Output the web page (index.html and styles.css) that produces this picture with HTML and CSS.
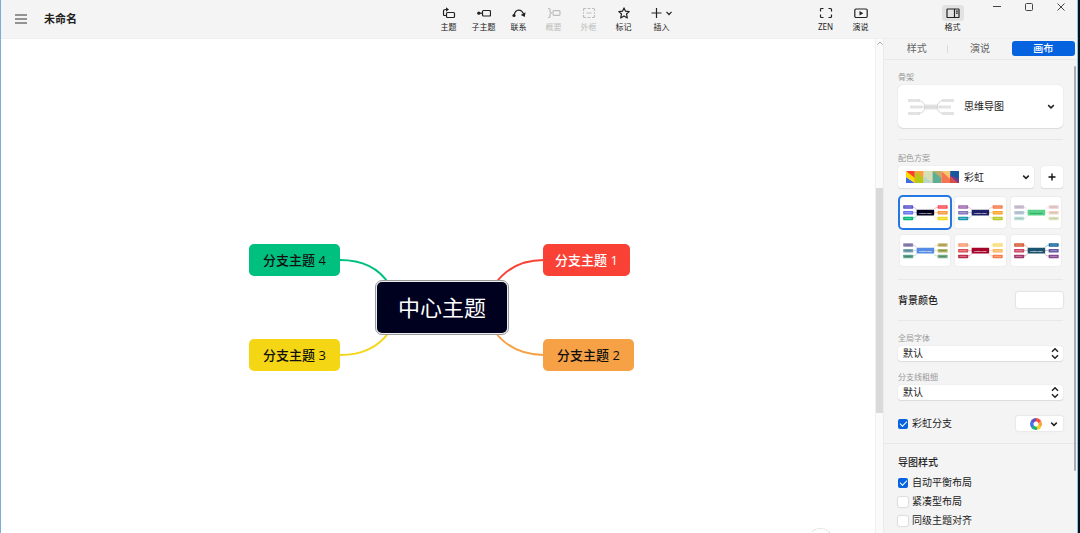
FILE: index.html
```html
<!DOCTYPE html>
<html lang="zh-CN">
<head>
<meta charset="utf-8">
<title>未命名</title>
<link rel="stylesheet" href="styles.css">
</head>
<body>
<svg class="defs" aria-hidden="true">
  <symbol id="chevron" viewBox="0 0 8 8"><path d="M1.2 2.6 4 5.4 6.8 2.6" fill="none" stroke="currentColor" stroke-width="1.5"/></symbol>
  <symbol id="updown" viewBox="0 0 8 12"><path d="M1 4.2 4 1.3 7 4.2M1 7.8 4 10.7 7 7.8" fill="none" stroke="currentColor" stroke-width="1.5"/></symbol>
  <symbol id="map" viewBox="0 0 50 31">
    <g fill="none" stroke-width=".6" opacity=".6">
      <path d="M12 10Q15 10 18 14" stroke="var(--a)"/><path d="M12 15.500H17" stroke="var(--b)"/><path d="M12 21.500Q15 21.500 18 17" stroke="var(--c)"/>
      <path d="M38 10Q35 10 32 14" stroke="var(--d)"/><path d="M38 15.500H33" stroke="var(--e)"/><path d="M38 21.500Q35 21.500 32 17" stroke="var(--f)"/>
    </g>
    <rect x="3" y="8.200" width="10" height="3.500" rx=".6" fill="var(--a)"/><rect x="3" y="14" width="10" height="3.500" rx=".6" fill="var(--b)"/><rect x="3" y="19.700" width="10" height="3.500" rx=".6" fill="var(--c)"/>
    <rect x="37.500" y="8.200" width="10" height="3.500" rx=".6" fill="var(--d)"/><rect x="37.500" y="14" width="10" height="3.500" rx=".6" fill="var(--e)"/><rect x="37.500" y="19.700" width="10" height="3.500" rx=".6" fill="var(--f)"/>
    <rect x="16.500" y="12.800" width="17.500" height="5.600" rx=".8" fill="var(--m)"/>
    <g stroke="var(--t)" stroke-width="1" opacity=".35"><path d="M4.500 10h7M4.500 15.700h7M4.500 21.400h7M39 10h7M39 15.700h7M39 21.400h7"/></g>
  </symbol>
</svg>
<div class="app">
  <header class="topbar">
    <div class="doc">
      <button class="menu" aria-label="菜单"><svg width="12" height="10" viewBox="0 0 12 10"><path d="M0 1h12M0 5h12M0 9h12" stroke="#333" stroke-width="1.200"/></svg></button>
      <h1 class="title">未命名</h1>
    </div>
    <nav class="tools">
      <button class="tool"><svg class="ico" viewBox="0 0 14 12"><rect x="4.500" y="5.500" width="8" height="5" rx="1"/><path d="M4.500 8.500H2.500Q1.500 8.500 1.500 7.500V4.500Q1.500 2.500 3.500 2.500H5"/><path class="dot" d="M4 .2 7 2.500 4 4.800Z"/></svg>主题</button>
      <button class="tool"><svg class="ico" viewBox="0 0 14 12"><rect x="5.500" y="3.500" width="8" height="5.500" rx="1"/><path d="M1 6.200H5.500"/><circle class="dot" cx="1.800" cy="6.200" r="1.600"/></svg>子主题</button>
      <button class="tool"><svg class="ico" viewBox="0 0 14 12"><path d="M2 8.500C3.500 1.500 9.500 1.500 12 8"/><circle class="dot" cx="2" cy="8.500" r="1.600"/><path class="dot" d="M13.500 5.200 12.800 10 8.800 8Z"/></svg>联系</button>
      <button class="tool" disabled><svg class="ico" viewBox="0 0 14 12"><path d="M1 1.500H2Q3 1.500 3 2.500V4.800L4.300 6 3 7.200V9.500Q3 10.500 2 10.500H1"/><rect x="6" y="3.700" width="7" height="4.600" rx="1"/></svg>概要</button>
      <button class="tool" disabled><svg class="ico" viewBox="0 0 14 12"><path d="M4 1.500H2.500Q1.500 1.500 1.500 2.500V4M1.500 5.200V6.800M1.500 8V9.500Q1.500 10.500 2.500 10.500H4M10 1.500h1.500Q12.500 1.500 12.500 2.500V4M12.500 5.200V6.800M12.500 8V9.500Q12.500 10.500 11.500 10.500H10M5.500 1.500h3M5.500 10.500h3M4.500 6h5"/></svg>外框</button>
      <button class="tool"><svg class="ico" viewBox="0 0 14 12"><path stroke-linejoin="round" d="M7 .9 8.500 4.200 12.200 4.600 9.500 7 10.300 10.900 7 8.900 3.700 10.900 4.500 7 1.800 4.600 5.500 4.200Z"/></svg>标记</button>
      <button class="tool tool-wide"><svg class="ico ico-wide" viewBox="0 0 22 12"><path d="M.5 6H10.500M5.500 1V11M15.500 4.800 18 7.500 20.500 4.800"/></svg>插入</button>
    </nav>
    <div class="right">
      <button class="tool"><svg class="ico" viewBox="0 0 14 12"><path d="M4.500 1.500H2.500Q1.500 1.500 1.500 2.500V4.500M9.500 1.500h2Q12.500 1.500 12.500 2.500V4.500M1.500 7.500V9.500Q1.500 10.500 2.500 10.500H4.500M12.500 7.500V9.500Q12.500 10.500 11.500 10.500H9.500"/></svg>ZEN</button>
      <button class="tool"><svg class="ico" viewBox="0 0 14 12"><rect x=".8" y="2" width="12.400" height="8.500" rx="1.200"/><path class="dot" d="M5.500 4 9.300 6.200 5.500 8.500Z"/></svg>演说</button>
      <button class="tool format"><span class="chip"><svg class="ico" viewBox="0 0 14 12"><rect x="1" y="2" width="12" height="8.500" rx=".6"/><path d="M8.500 2v8.500M10 4.200h1.800M10 6.200h1.800"/></svg></span>格式</button>
      <div class="window">
        <button aria-label="最小化"><svg width="8" height="8" viewBox="0 0 8 8"><path d="M0 3.500H8"/></svg></button>
        <button aria-label="最大化"><svg width="8" height="8" viewBox="0 0 8 8"><rect x=".5" y=".5" width="7" height="7" rx="1"/></svg></button>
        <button aria-label="关闭"><svg width="8" height="8" viewBox="0 0 8 8"><path d="M.5.5 7.500 7.500M7.500.5.5 7.500"/></svg></button>
      </div>
    </div>
  </header>
  <div class="work">
    <main class="canvas">
      <svg class="links" width="386" height="127" viewBox="0 0 386 127" fill="none" stroke-width="2">
        <path d="M91 16C116 16 131 26 140 40" stroke="#00c080"/>
        <path d="M91 111C116 111 131 101 140 88" stroke="#f4d614"/>
        <path d="M295 16C270 16 256 26 246 40" stroke="#fa4136"/>
        <path d="M295 111C270 111 256 101 246 88" stroke="#f6a145"/>
      </svg>
      <div class="node branch b4">分支主题 4</div>
      <div class="node branch b3">分支主题 3</div>
      <div class="node branch b1">分支主题 1</div>
      <div class="node branch b2">分支主题 2</div>
      <div class="node center">中心主题</div>
      <div class="handle"></div>
    </main>
    <div class="track"><svg width="6" height="4" viewBox="0 0 6 4"><path d="M.5 3.500 3 1 5.500 3.500" fill="none" stroke="#aaa"/></svg><div class="before"></div><div class="thumb"></div><div class="after"></div></div>
    <aside class="panel">
      <div class="tabs"><button>样式</button><button>演说</button><button class="on">画布</button></div>
      <div class="scroll"></div>
      <section class="sec first">
        <label class="cap" for="skeleton">骨架</label>
        <div class="pick card">
          <svg class="lead" width="48" height="18" viewBox="0 0 48 18"><g fill="#e3e3e3"><rect x="1" y="1" width="12" height="3"/><rect x="3" y="7.500" width="12" height="3"/><rect x="1" y="14" width="12" height="3"/><rect x="17" y="6.500" width="14" height="5"/><rect x="35" y="1" width="12" height="3"/><rect x="32" y="7.500" width="12" height="3"/><rect x="35" y="14" width="12" height="3"/></g><path d="M12 2.500Q17 3 18 9 17 15 12 15.500M14 9H34M36 2.500Q31 3 30 9 31 15 36 15.500" fill="none" stroke="#d6d6d6"/></svg>
          <select id="skeleton"><option>思维导图</option></select><svg class="arrow"><use href="#chevron"/></svg>
        </div>
      </section>
      <section class="sec">
        <label class="cap" for="scheme">配色方案</label>
        <div class="row">
          <div class="pick scheme">
            <svg class="lead" width="53" height="12" viewBox="0 0 54 12" preserveAspectRatio="none">
              <path fill="#ff3b30" d="M0 0h9v12z"/><path fill="#4169e8" d="M0 6 9 12H0z"/><path fill="#ffd800" d="M0 0 9 7v5L0 6z"/><path fill="#f7a13c" d="M9 0h9v12z"/><path fill="#b5c916" d="M9 0 18 8v4H9z"/>
              <path fill="#d9dfb5" d="M18 0h9v12h-9z"/><path fill="#b9d8cd" d="M18 5 27 12h-9z"/><path fill="#bcae64" d="M27 0h9v12z"/><path fill="#5fae94" d="M27 0 36 7v5h-9z"/>
              <path fill="#f7c56d" d="M36 0h9v12z"/><path fill="#f47550" d="M36 0 45 8v4h-9z"/><path fill="#16589b" d="M45 0h9v12h-9z"/><path fill="#743c88" d="M45 4 54 8v4h-9z"/><path fill="#d94f49" d="M45 5 53 12h-8z"/>
            </svg>
            <select id="scheme"><option>彩虹</option></select><svg class="arrow"><use href="#chevron"/></svg>
          </div>
          <button class="add" aria-label="添加"><svg width="8" height="8" viewBox="0 0 8 8"><path d="M4 .5v7M.5 4h7" stroke="#111" stroke-width="1.400"/></svg></button>
        </div>
        <div class="themes">
          <button class="theme t1 on" aria-label="配色 1"><svg viewBox="0 0 50 31"><use href="#map"/><text x="25.200" y="16.600">Central Topic</text></svg></button>
          <button class="theme t2" aria-label="配色 2"><svg viewBox="0 0 50 31"><use href="#map"/><text x="25.200" y="16.600">Central Topic</text></svg></button>
          <button class="theme t3" aria-label="配色 3"><svg viewBox="0 0 50 31"><use href="#map"/><text x="25.200" y="16.600">Central Topic</text></svg></button>
          <button class="theme t4" aria-label="配色 4"><svg viewBox="0 0 50 31"><use href="#map"/><text x="25.200" y="16.600">Central Topic</text></svg></button>
          <button class="theme t5" aria-label="配色 5"><svg viewBox="0 0 50 31"><use href="#map"/><text x="25.200" y="16.600">Central Topic</text></svg></button>
          <button class="theme t6" aria-label="配色 6"><svg viewBox="0 0 50 31"><use href="#map"/><text x="25.200" y="16.600">Central Topic</text></svg></button>
        </div>
      </section>
      <section class="sec bg"><h2>背景颜色</h2><button class="swatch" aria-label="背景颜色"></button></section>
      <section class="sec last">
        <label class="cap" for="font">全局字体</label>
        <div class="pick slim"><select id="font"><option>默认</option></select><svg class="arrow tall"><use href="#updown"/></svg></div>
        <label class="cap next" for="width">分支线粗细</label>
        <div class="pick slim"><select id="width"><option>默认</option></select><svg class="arrow tall"><use href="#updown"/></svg></div>
        <div class="rainbow">
          <label class="check"><input type="checkbox" checked>彩虹分支</label>
          <button class="wheel" aria-label="彩虹颜色"><span class="ring"></span><svg class="chev"><use href="#chevron"/></svg></button>
        </div>
      </section>
      <section class="opts">
        <h2>导图样式</h2>
        <label class="check"><input type="checkbox" checked>自动平衡布局</label>
        <label class="check"><input type="checkbox">紧凑型布局</label>
        <label class="check"><input type="checkbox">同级主题对齐</label>
      </section>
    </aside>
  </div>
</div>
</body>
</html>
```
FILE: styles.css
```css
* { box-sizing: border-box; }
body { margin: 0; overflow: hidden; font-size: 10px; line-height: 15px; color: #222; }
body, button, select { font-family: "Noto Sans", "Noto Sans CJK SC", sans-serif; }
button { border: 0; padding: 0; background: none; color: inherit; }
svg { display: block; }
h1, h2 { margin: 0; }
h2 { font-size: 10px; line-height: 15px; font-weight: 500; }
.defs { position: absolute; width: 0; height: 0; }

.app { height: 100vh; display: flex; flex-direction: column; border-left: 1px solid #79abdc; border-right: 2px solid #03121f; }
.topbar { height: 39px; flex: none; display: grid; grid-template-columns: 1fr auto 395px; background: #f4f4f4; border-bottom: 1px solid #efefef; border-right: 1px solid #8fc0e0; }
.doc { display: flex; align-items: center; gap: 17px; padding-left: 14px; }
.title { font-size: 11px; line-height: 16px; font-weight: 700; }
.tools { display: flex; }
.tool { width: 35px; display: flex; flex-direction: column; align-items: center; gap: 2px; padding-top: 7px; font-size: 8px; line-height: 12px; white-space: nowrap; }
.tool-wide { width: 41px; }
.tool:disabled { color: #bdbdbd; }
.ico { width: 14px; height: 12px; fill: none; stroke: currentColor; stroke-width: 1.2; }
.ico-wide { width: 22px; }
.ico .dot { fill: currentColor; stroke: none; }
.right { display: flex; justify-content: flex-end; }
.format { margin-left: 57px; gap: 0; padding-top: 5px; }
.chip { padding: 2px 4px; border-radius: 3px; background: #e2e2e2; }
.window { display: flex; margin-left: 11px; height: 14px; }
.window button { width: 32px; display: flex; justify-content: center; padding-top: 3px; }
.window svg { fill: none; stroke: #444; }

.work { flex: 1; min-height: 0; display: flex; }
.canvas { position: relative; flex: 1; background: #fff; overflow: hidden; }
.links { position: absolute; left: 248px; top: 205px; }
.node { position: absolute; display: flex; align-items: center; justify-content: center; white-space: nowrap; }
.branch { height: 32px; padding: 0 14px; border-radius: 5px; font: 500 13px/20px "Open Sans", "Noto Sans CJK SC", sans-serif; color: #111; }
.b4 { left: 248px; top: 205px; background: #00c080; }
.b3 { left: 248px; top: 300px; background: #f4d614; }
.b1 { left: 542px; top: 205px; padding: 0 12px; background: #fa4136; color: #fff; }
.b2 { left: 542px; top: 300px; background: #f6a145; }
.center { left: 376px; top: 243px; width: 130px; height: 51px; padding-bottom: 2px; border-radius: 5px; background: #00001f; color: #fff; font-size: 22px; line-height: 32px; outline: 1px solid #999; outline-offset: 1px; box-shadow: 0 0 0 1px #eee; }
.handle { position: absolute; left: 807px; bottom: -20px; width: 25px; height: 25px; border: 1px dotted #ccc; border-radius: 50%; }
.track { width: 8px; display: flex; flex-direction: column; align-items: center; padding-top: 2px; background: #fafafa; border-left: 1px solid #f0f0f0; }
.before { flex: 143; }
.thumb { flex: 225; width: 100%; background: #dadada; }
.after { flex: 120; }

.panel { position: relative; width: 195px; background: #f4f4f4; border-left: 1px solid #ececec; border-right: 1px solid #8fc0e0; overflow: hidden; }
.tabs { height: 21px; padding: 2px 2px 3px 1px; display: flex; border-bottom: 1px solid #e9e9e9; color: #666; }
.tabs button { flex: 1; font-size: 10px; line-height: 15px; }
.tabs button:first-child { background: linear-gradient(#ddd, #ddd) right center / 1px 8px no-repeat; }
.tabs .on { background: #0563e0; color: #fff; border-radius: 3px; font-weight: 500; }
.scroll { position: absolute; right: 1px; top: 27px; width: 2px; height: 405px; background: #a9adb0; border-radius: 1px; }
.sec { margin: 0 14px; padding: 12px 0; border-bottom: 1px solid #e8e8e8; }
.first { padding: 11px 0; }
.cap { display: block; font-size: 8px; line-height: 12px; margin-bottom: 2px; color: #999; }
.pick { position: relative; }
.pick select { display: block; width: 100%; height: 22px; border: 0; border-radius: 3px; padding: 0 20px 0 66px; background: #fff; color: #222; font-size: 10px; line-height: 15px; appearance: none; box-shadow: 0 0 1px #ccc, 0 1px 1px #ddd; }
.card select { height: 43px; border-radius: 5px; }
.slim select { height: 15px; padding: 0 20px 0 5px; }
.lead { position: absolute; left: 8px; top: 5px; pointer-events: none; }
.card .lead { left: 9px; top: 13px; }
.arrow { position: absolute; right: 8px; top: 0; width: 8px; height: 100%; pointer-events: none; }
.scheme .arrow { right: 4px; }
.arrow.tall { right: 4px; padding: 1px 0; }
.row { display: flex; gap: 7px; }
.scheme { flex: 1; }
.add { width: 22px; height: 22px; display: flex; align-items: center; justify-content: center; border-radius: 3px; background: #fff; box-shadow: 0 0 1px #ccc, 0 1px 1px #ddd; }
.themes { display: grid; grid-template-columns: repeat(3, 1fr); gap: 7px 5px; padding: 9px 2px 1px; }
.theme { --t: #fff; --u: #fff; height: 31px; border-radius: 3px; background: #fff; box-shadow: 0 0 2px #ddd; }
.theme svg { width: 100%; height: 31px; }
.theme text { font-family: "Liberation Sans", sans-serif; font-size: 2px; font-weight: 700; text-anchor: middle; fill: var(--u); }
.theme.on { box-shadow: 0 0 0 2px #2577e3; }
.t1 { --a: #5855c8; --b: #6674ee; --c: #00b875; --d: #fb4e55; --e: #f89a3b; --f: #efd91c; --m: #00001f; }
.t2 { --a: #a26ab0; --b: #8375ba; --c: #1696ae; --d: #f57d4c; --e: #faa62e; --f: #b9c928; --m: #1d2067; }
.t3 { --t: #999; --u: #18763f; --a: #ccbfd4; --b: #b8c9da; --c: #b8ddd5; --d: #ebccd0; --e: #f1d4c0; --f: #dee3ba; --m: #55d488; }
.t4 { --t: #333; --a: #9185b6; --b: #79a7b7; --c: #58a892; --d: #c9b96b; --e: #b0b963; --f: #75af87; --m: #568ce4; }
.t5 { --a: #fa9b72; --b: #d95055; --c: #bc2948; --d: #f8dc76; --e: #fbb85f; --f: #f77b47; --m: #a5062c; }
.t6 { --a: #d65b36; --b: #cc4564; --c: #a4356b; --d: #17689f; --e: #6455a1; --f: #884491; --m: #1c546f; }
.bg { height: 41px; padding: 0; display: flex; align-items: center; justify-content: space-between; }
.swatch { width: 47px; height: 16px; border-radius: 2px; background: #fff; box-shadow: 0 0 2px #bbb; }
.last { margin: 0; padding: 11px 14px 12px; }
.next { margin-top: 10px; }
.rainbow { display: flex; align-items: center; justify-content: space-between; margin-top: 16px; }
.wheel { width: 47px; height: 15px; display: flex; align-items: center; gap: 8px; padding-left: 14px; border-radius: 2px; background: #fff; box-shadow: 0 0 2px #ccc; }
.ring { width: 12px; height: 12px; border-radius: 50%; background: radial-gradient(#fff 0 2px, transparent 3px), conic-gradient(#f6503f 0 60deg, #f9a23d 60deg 110deg, #f6ca27 110deg 170deg, #18b978 170deg 230deg, #4775e8 230deg 300deg, #6650bd 300deg); }
.chev { width: 8px; height: 8px; }
.check { height: 19px; display: flex; align-items: center; gap: 4px; }
.rainbow .check { height: 15px; }
.check input { appearance: none; margin: 0; width: 10px; height: 10px; border-radius: 2px; background: #fff; box-shadow: 0 0 1px 1px #ddd; }
.check input:checked { box-shadow: none; background: #0563e0; display: grid; place-items: center; }
.check input:checked::before { content: ""; width: 6px; height: 3px; border: solid #fff; border-width: 0 0 1px 1px; transform: rotate(-45deg); margin-bottom: 2px; }
.opts { padding: 11px 14px 0; }
.opts h2 { margin-bottom: 3px; }
```
